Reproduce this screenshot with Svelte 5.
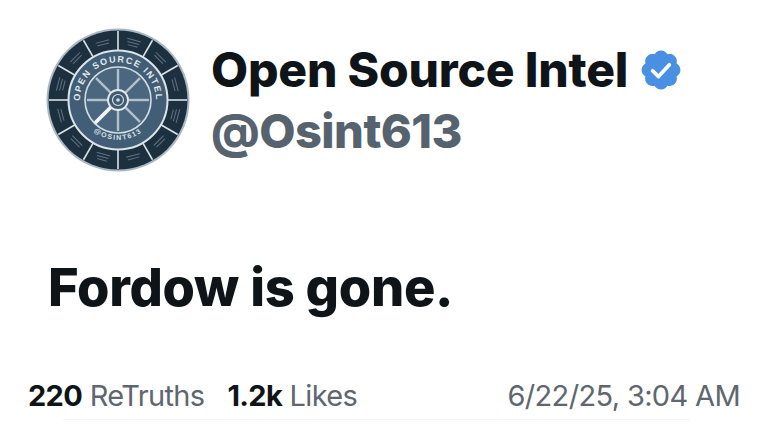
<script>
  const cx = 72, cy = 72;
  const polar = (r, deg) => {
    const a = (deg - 90) * Math.PI / 180;
    return [cx + r * Math.cos(a), cy + r * Math.sin(a)];
  };
  const dividers = Array.from({ length: 12 }, (_, i) => {
    const [x1, y1] = polar(49, i * 30);
    const [x2, y2] = polar(69, i * 30);
    return { x1, y1, x2, y2 };
  });
  const captions = Array.from({ length: 12 }, (_, i) => {
    const deg = i * 30 + 15;
    const [x, y] = polar(59, deg);
    const rot = deg > 110 && deg < 250 ? deg + 180 : deg;
    return { x, y, rot, lines: i % 3 === 0 ? 3 : 2 };
  });
  const spokes = Array.from({ length: 8 }, (_, i) => {
    const [x1, y1] = polar(9, i * 45);
    const [x2, y2] = polar(31, i * 45);
    return { x1, y1, x2, y2 };
  });
</script>

<main class="post">
  <header class="author">
    <svg class="avatar" viewBox="0 0 144 144" width="144" height="144" aria-label="Open Source Intel logo">
      <defs>
        <path id="ring-top" d="M 39 91 A 38 38 0 1 1 105 91" />
        <path id="ring-bottom" d="M 32 72 A 40 40 0 0 0 112 72" />
      </defs>
      <circle cx="72" cy="72" r="71.5" fill="#a9b8c1" />
      <circle cx="72" cy="72" r="69.5" fill="#1c3040" />
      {#each dividers as d}
        <line x1={d.x1} y1={d.y1} x2={d.x2} y2={d.y2} stroke="#d9e2e5" stroke-width="1.6" />
      {/each}
      {#each captions as c}
        <g transform="rotate({c.rot} {c.x} {c.y})" stroke="#7f909c" stroke-width="1" opacity="0.7">
          {#each Array(c.lines) as _, j}
            <line x1={c.x - 7 + j} x2={c.x + 7 - j} y1={c.y - (c.lines - 1) * 1.5 + j * 3} y2={c.y - (c.lines - 1) * 1.5 + j * 3} />
          {/each}
        </g>
      {/each}
      <circle cx="72" cy="72" r="49.500" fill="#425e76" stroke="#dbe5e8" stroke-width="2" />
      <circle cx="72" cy="72" r="33" fill="#4a677f" stroke="#d3dee2" stroke-width="1.6" />
      <text class="ring" fill="#e2e9ec"><textPath href="#ring-top" startOffset="50%" text-anchor="middle">OPEN SOURCE INTEL</textPath></text>
      <text class="ring small" fill="#dbe4e8"><textPath href="#ring-bottom" startOffset="50%" text-anchor="middle">@OSINT613</textPath></text>
      {#each spokes as s}
        <line x1={s.x1} y1={s.y1} x2={s.x2} y2={s.y2} stroke="#b3c1ca" stroke-width="2.400" />
      {/each}
      <line x1="66" y1="78" x2="50" y2="94" stroke="#f1f4f5" stroke-width="3.800" stroke-linecap="round" />
      <circle cx="72" cy="72" r="10" fill="#3f5a71" stroke="#e3eaed" stroke-width="1.800" />
      <circle cx="72" cy="72" r="5.500" fill="none" stroke="#d5dfe3" stroke-width="1.200" />
      <circle cx="72" cy="72" r="1.800" fill="#d5dfe3" />
    </svg>
    <div class="names">
      <div class="display">
        <span class="name">Open Source Intel</span>
        <svg class="badge" viewBox="0 0 22 22" width="50" height="50" aria-label="Verified">
          <path fill="#4a90e2" d="M20.400 11c0-1.200-.7-2.300-1.700-2.900.3-1.100.1-2.400-.8-3.200-.8-.9-2.100-1.100-3.200-.8C14.100 3.100 13.100 2.400 11.900 2.400h-.1c-1.200 0-2.200.7-2.800 1.700-1.100-.3-2.400-.1-3.200.8-.9.8-1.100 2.100-.8 3.200C4 8.700 3.300 9.800 3.300 11s.7 2.300 1.700 2.900c-.3 1.100-.1 2.400.8 3.200.8.9 2.100 1.100 3.200.8.6 1 1.600 1.700 2.800 1.700h.1c1.200 0 2.200-.7 2.800-1.700 1.100.3 2.400.1 3.200-.8.9-.8 1.100-2.100.8-3.200 1-.6 1.700-1.700 1.700-2.900z" transform="translate(-.85 0)" />
          <path d="M7.300 11.300l2.600 2.600 4.800-5.200" fill="none" stroke="#fff" stroke-width="1.600" stroke-linecap="round" stroke-linejoin="round" />
        </svg>
      </div>
      <div class="handle">@Osint613</div>
    </div>
  </header>

  <p class="body">Fordow is gone.</p>

  <footer class="meta">
    <div class="stats">
      <span><b>220</b> ReTruths</span>
      <span><b>1.2k</b> Likes</span>
    </div>
    <time>6/22/25, 3:04 AM</time>
  </footer>
  <div class="next"></div>
</main>

<style>
  :global(body) {
    margin: 0;
    background: #ffffff;
  }
  .post {
    width: 768px;
    height: 432px;
    box-sizing: border-box;
    padding: 28px 28px 0 28px;
    display: flex;
    flex-direction: column;
    font-family: Inter, "Liberation Sans", sans-serif;
    color: #0f1419;
    overflow: hidden;
  }
  .author {
    display: flex;
    align-items: flex-start;
    gap: 21px;
    margin-left: 18px;
  }
  .avatar {
    flex: none;
  }
  .names {
    display: flex;
    flex-direction: column;
    padding-top: 9px;
  }
  .display {
    display: flex;
    align-items: center;
    gap: 8px;
    height: 66px;
  }
  .name {
    font-size: 48px;
    font-weight: 800;
    letter-spacing: -0.2px;
    line-height: 66px;
    white-space: nowrap;
  }
  .handle {
    font-size: 47px;
    font-weight: 800;
    letter-spacing: -0.55px;
    line-height: 56px;
    color: #56636f;
  }
  .ring {
    font-family: "Liberation Sans", sans-serif;
    font-size: 9px;
    font-weight: 700;
    letter-spacing: 1.500px;
  }
  .ring.small {
    font-size: 7px;
    letter-spacing: 1.400px;
  }
  .body {
    margin: 85px 0 0 20px;
    font-size: 52.400px;
    font-weight: 800;
    letter-spacing: -0.3px;
    line-height: 60px;
  }
  .meta {
    display: flex;
    justify-content: space-between;
    align-items: center;
    margin-top: 61px;
    font-size: 29px;
    letter-spacing: -0.65px;
    line-height: 36px;
    color: #5f6670;
  }
  .stats {
    display: flex;
    gap: 23px;
  }
  .stats b {
    color: #0f1419;
    font-weight: 700;
  }
  .next {
    height: 1px;
    margin: 5px 50px 0 35px;
    background: #f6f6f6;
  }
</style>
